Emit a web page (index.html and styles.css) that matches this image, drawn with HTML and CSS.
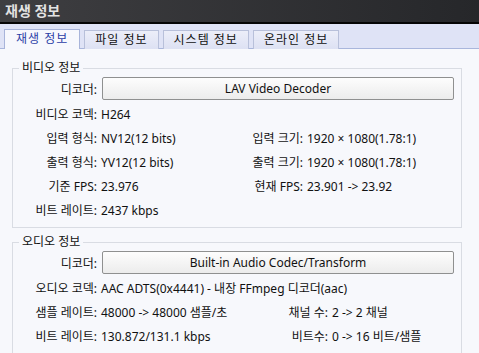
FILE: index.html
```html
<!DOCTYPE html>
<html lang="ko">
<head>
    <meta charset="UTF-8">
    <title>재생 정보</title>
    <link rel="stylesheet" href="styles.css">
</head>
<body>
    <div class="janela">
        <div class="titulo">재생 정보</div>
        <div class="abas">
            <div class="aba ativa">재생 정보</div>
            <div class="aba">파일 정보</div>
            <div class="aba">시스템 정보</div>
            <div class="aba">온라인 정보</div>
        </div>
        <div class="conteudo">
            <fieldset class="grupo video">
                <legend>비디오 정보</legend>
                <div class="decoder">
                    <span class="lbl">디코더:</span>
                    <button>LAV Video Decoder</button>
                </div>
                <div class="linha">
                    <span class="lbl">비디오 코덱:</span><span class="val">H264</span>
                </div>
                <div class="linha">
                    <span class="lbl">입력 형식:</span><span class="val">NV12(12 bits)</span>
                    <span class="lbl">입력 크기:</span><span class="val">1920 × 1080(1.78:1)</span>
                </div>
                <div class="linha">
                    <span class="lbl">출력 형식:</span><span class="val">YV12(12 bits)</span>
                    <span class="lbl">출력 크기:</span><span class="val">1920 × 1080(1.78:1)</span>
                </div>
                <div class="linha">
                    <span class="lbl">기준 FPS:</span><span class="val">23.976</span>
                    <span class="lbl">현재 FPS:</span><span class="val">23.901 -&gt; 23.92</span>
                </div>
                <div class="linha">
                    <span class="lbl">비트 레이트:</span><span class="val">2437 kbps</span>
                </div>
            </fieldset>
            <fieldset class="grupo audio">
                <legend>오디오 정보</legend>
                <div class="decoder">
                    <span class="lbl">디코더:</span>
                    <button>Built-in Audio Codec/Transform</button>
                </div>
                <div class="linha">
                    <span class="lbl">오디오 코덱:</span><span class="val largo">AAC ADTS(0x4441) - 내장 FFmpeg 디코더(aac)</span>
                </div>
                <div class="linha">
                    <span class="lbl">샘플 레이트:</span><span class="val">48000 -&gt; 48000 샘플/초</span>
                    <span class="lbl">채널 수:</span><span class="val">2 -&gt; 2 채널</span>
                </div>
                <div class="linha">
                    <span class="lbl">비트 레이트:</span><span class="val">130.872/131.1 kbps</span>
                    <span class="lbl">비트수:</span><span class="val">0 -&gt; 16 비트/샘플</span>
                </div>
            </fieldset>
        </div>
    </div>
</body>
</html>
```

FILE: styles.css
```css
body {
    margin: 0;
    background-color: #f7f8fc;
    font-family: "Noto Sans", "Noto Sans CJK KR", sans-serif;
    font-size: 12px;
    color: #111;
    overflow: hidden;
}

.janela {
    width: 479px;
    height: 353px;
}

.titulo {
    height: 22px;
    line-height: 22px;
    padding-left: 5px;
    background: linear-gradient(to right, #3e3e41, #26272a);
    border-bottom: 2px solid #050505;
    color: #e2e2e2;
    font-size: 14px;
    font-weight: bold;
}

.abas {
    display: flex;
    align-items: flex-end;
    gap: 4px;
    height: 24px;
    padding-left: 4px;
    background-color: #dfe3f6;
    border-bottom: 1px solid #a9b6dc;
}

.aba {
    height: 18px;
    line-height: 18px;
    padding: 0 10px;
    margin-bottom: -1px;
    border: 1px solid #b8c0da;
    border-bottom: none;
    background: linear-gradient(to bottom, #eceef9, #dde1f3);
    letter-spacing: 1px;
    color: #111;
}

.aba.ativa {
    height: 19px;
    padding: 0 11px;
    background: #f7f8fd;
    border-color: #a8b4da;
    color: #2b3ea6;
}

.conteudo {
    padding: 12px 0 0 12px;
}

.grupo {
    width: 448px;
    margin: 0 0 7px 0;
    padding: 2px 0 4px 0;
    border: 1px solid #d9dce3;
    min-width: 0;
}

.grupo legend {
    margin-left: 6px;
    padding: 0 3px;
    line-height: 14px;
    font-size: 12px;
}

.decoder {
    display: flex;
    align-items: center;
    height: 23px;
    margin-bottom: 3px;
}

.decoder .lbl {
    width: 84px;
    text-align: right;
}

.decoder button {
    flex: 1;
    height: 23px;
    margin: 0 7px 0 5px;
    border: 1px solid #8f9090;
    border-radius: 2px;
    background: linear-gradient(to bottom, #fdfdfd, #ececec);
    font-family: inherit;
    font-size: 12px;
    color: #111;
    padding: 0;
}

.linha {
    display: grid;
    height: 24px;
    line-height: 24px;
    white-space: nowrap;
}

.video .linha {
    grid-template-columns: 84px 148px 58px 1fr;
}

.audio .linha {
    grid-template-columns: 84px 173px 58px 1fr;
}

.linha .lbl {
    text-align: right;
}

.linha .val {
    padding-left: 4px;
}

.linha .val.largo {
    grid-column: 2 / 5;
}
```
